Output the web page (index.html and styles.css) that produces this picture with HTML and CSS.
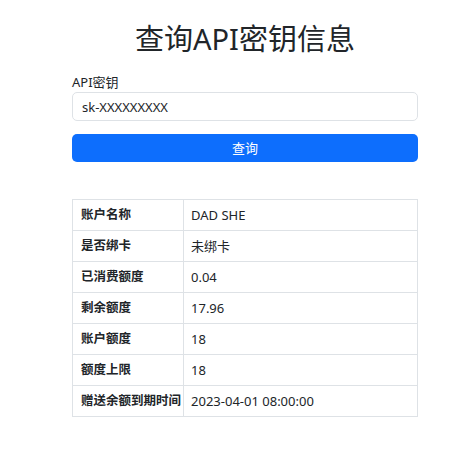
FILE: index.html
```html
<!DOCTYPE html>
<html lang="zh-CN">
<head>
<meta charset="utf-8">
<title>查询API密钥信息</title>
<link rel="stylesheet" href="styles.css">
</head>
<body>
<main class="container">
  <h1 class="title">查询API密钥信息</h1>
  <form class="query-form">
    <label class="field-label" for="apikey">API密钥</label>
    <input class="field-input" id="apikey" type="text" value="sk-XXXXXXXXX">
    <button class="btn-primary" type="button">查询</button>
  </form>
  <table class="info-table">
    <tbody>
      <tr><th>账户名称</th><td>DAD SHE</td></tr>
      <tr><th>是否绑卡</th><td>未绑卡</td></tr>
      <tr><th>已消费额度</th><td>0.04</td></tr>
      <tr><th>剩余额度</th><td>17.96</td></tr>
      <tr><th>账户额度</th><td>18</td></tr>
      <tr><th>额度上限</th><td>18</td></tr>
      <tr><th>赠送余额到期时间</th><td>2023-04-01 08:00:00</td></tr>
    </tbody>
  </table>
</main>
</body>
</html>
```

FILE: styles.css
```css
* {
  box-sizing: border-box;
}

body {
  margin: 0;
  background: #fff;
  color: #212529;
  font-family: "Noto Sans", "Noto Sans CJK SC", sans-serif;
  font-size: 14px;
  line-height: 20px;
}

.container {
  width: 346px;
  margin-left: 72px;
}

.title {
  margin: 21px 0 0;
  font-size: 29px;
  line-height: 36px;
  font-weight: 400;
  text-align: center;
}

.query-form {
  display: flex;
  flex-direction: column;
  margin-top: 18px;
}

.field-label {
  display: block;
  line-height: 14px;
  font-size: 13px;
  margin-bottom: 3px;
}

.field-input {
  height: 29px;
  padding: 0 9px;
  border: 1px solid #dee2e6;
  border-radius: 5px;
  font: inherit;
  font-size: 13px;
  color: #212529;
  background: #fff;
}

.btn-primary {
  margin-top: 13px;
  height: 28px;
  border: 0;
  border-radius: 5px;
  background: #0d6efd;
  color: #fff;
  font: inherit;
  font-size: 13px;
}

.info-table {
  width: 100%;
  margin-top: 37px;
  border-collapse: collapse;
  font-size: 13px;
}

.info-table th,
.info-table td {
  height: 31px;
  padding: 0 7px;
  border: 1px solid #dee2e6;
  text-align: left;
  vertical-align: middle;
}

.info-table th {
  width: 111px;
  padding: 0 2px 0 8px;
  font-size: 12.5px;
  font-weight: 700;
  white-space: nowrap;
}
```
